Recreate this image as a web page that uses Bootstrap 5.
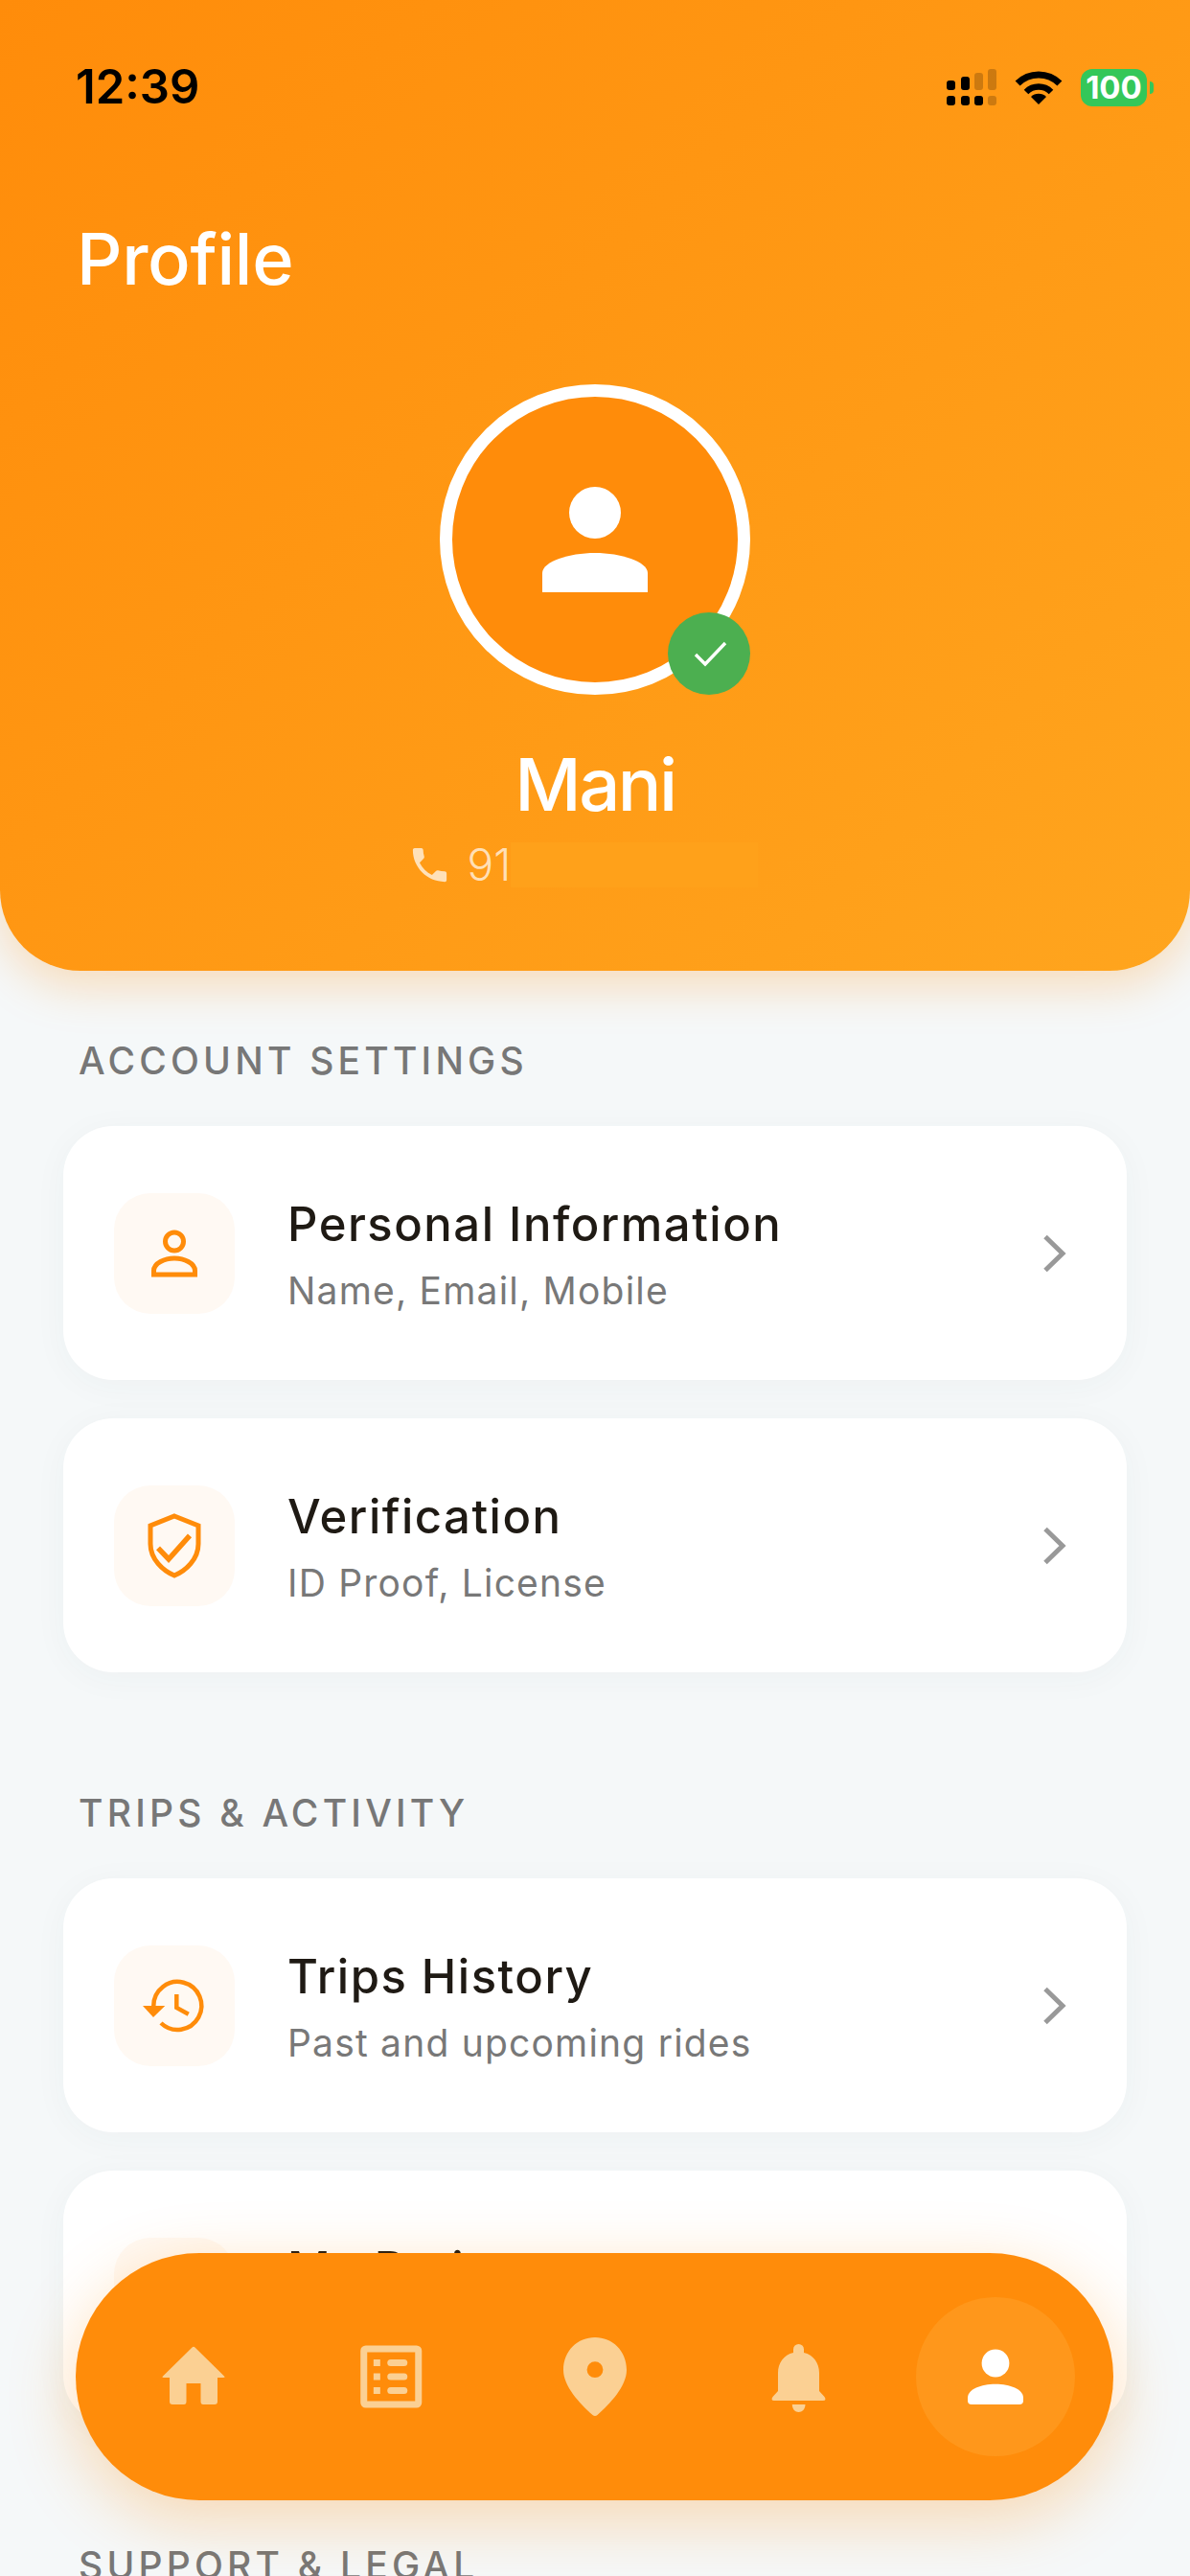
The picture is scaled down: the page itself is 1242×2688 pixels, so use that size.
<!DOCTYPE html>
<html lang="en">
<head>
    <meta charset="UTF-8">
    <meta name="viewport" content="width=device-width, initial-scale=1.0">
    <title>Profile</title>
    <link href="https://cdn.jsdelivr.net/npm/bootstrap@5.3.0/dist/css/bootstrap.min.css" rel="stylesheet">
    <style>
        html, body {
            height: 100vh;
            overflow: hidden;
        }
        body {
            background-color: #f5f8f9;
            font-family: "Inter", "Liberation Sans", sans-serif;
        }
        .profile-head {
            background: linear-gradient(135deg, #ff8c0a 0%, #ffa51e 100%);
            border-radius: 0 0 84px 84px;
            box-shadow: 0 14px 50px rgba(255, 140, 10, 0.28);
            padding: 46px 0 87px;
        }
        .status-row {
            height: 90px;
            padding: 0 38px 0 79px;
        }
        .status-time {
            font-size: 49px;
            font-weight: 600;
            color: #000;
        }
        .status-icons {
            gap: 19px;
        }
        .batt-body {
            width: 69px;
            height: 39px;
            background-color: #34c759;
            border-radius: 12px;
            color: #fff;
            font-size: 33px;
            font-weight: 700;
            line-height: 39px;
            text-align: center;
        }
        .batt-nub {
            width: 4px;
            height: 13px;
            margin-left: 3px;
            background-color: #34c759;
            border-radius: 0 4px 4px 0;
        }
        .page-title {
            font-size: 74px;
            line-height: 90px;
            font-weight: 530;
            letter-spacing: -0.3px;
            color: #fff;
            margin: 89px 0 86px 80px;
        }
        .avatar-ring {
            width: 324px;
            height: 324px;
            border: 13px solid #fff;
            background-color: #ff8c0a;
        }
        .avatar-badge {
            width: 86px;
            height: 86px;
            right: -13px;
            bottom: -13px;
            background-color: #4caf50;
        }
        .user-name {
            font-size: 76px;
            line-height: 92px;
            font-weight: 530;
            letter-spacing: -2.5px;
            color: #fff;
            margin: 47px 0 15px;
        }
        .user-phone {
            height: 47px;
            color: rgba(255, 255, 255, 0.7);
            font-size: 46px;
            line-height: 47px;
            font-weight: 300;
        }
        .phone-mask {
            width: 258px;
            height: 47px;
            margin-right: 26px;
            background-color: #ffa11a;
        }
        .settings-wrap {
            padding: 71px 66px 0;
        }
        .group-label {
            font-size: 39px;
            line-height: 46px;
            font-weight: 500;
            letter-spacing: 4.2px;
            color: #777;
            padding-left: 16px;
            margin-bottom: 45px;
        }
        .group-next {
            margin-top: 124px;
        }
        .setting-card {
            height: 265px;
            border-radius: 52px;
            box-shadow: 0 6px 36px rgba(60, 70, 80, 0.04);
            margin-bottom: 40px;
            padding: 0 53px;
        }
        .setting-card:last-child {
            margin-bottom: 0;
        }
        .icon-tile {
            width: 126px;
            height: 126px;
            border-radius: 38px;
            background-color: #fff9f3;
            margin-right: 55px;
        }
        .setting-text {
            padding-top: 2px;
        }
        .setting-title {
            font-size: 49px;
            line-height: 60px;
            font-weight: 500;
            color: #1f1a14;
            letter-spacing: 1.5px;
        }
        .setting-sub {
            font-size: 39px;
            line-height: 46px;
            color: #787878;
            letter-spacing: 1.2px;
            margin-top: 16px;
        }
        .chevron-go {
            margin-right: 8px;
        }
        .bottom-bar {
            left: 79px;
            top: 2351px;
            width: 1083px;
            height: 258px;
            padding: 0 40px;
            border-radius: 129px;
            background-color: #ff8c0a;
            box-shadow: 0 20px 70px rgba(255, 140, 10, 0.3);
            z-index: 10;
        }
        .bar-item {
            width: 166px;
            height: 166px;
            color: #fbd093;
        }
        .bar-item.is-active {
            background-color: #ff971b;
            color: #fff;
        }
    </style>
</head>
<body>
    <div class="profile-head">
        <div class="status-row d-flex align-items-center justify-content-between">
            <span class="status-time">12:39</span>
            <div class="d-flex align-items-center status-icons">
                <svg width="52" height="38" viewBox="0 0 52 38" fill="#000">
                    <rect x="0" y="12" width="9" height="10" rx="3"/>
                    <rect x="15" y="8" width="9" height="14" rx="3"/>
                    <rect x="29" y="4" width="9" height="18" rx="3" opacity=".2"/>
                    <rect x="43" y="0" width="9" height="22" rx="3" opacity=".2"/>
                    <rect x="0" y="28" width="9" height="10" rx="3"/>
                    <rect x="15" y="28" width="9" height="10" rx="3"/>
                    <rect x="29" y="28" width="9" height="10" rx="3"/>
                    <rect x="43" y="28" width="9" height="10" rx="3" opacity=".2"/>
                </svg>
                <svg width="50" height="36" viewBox="0 0 50 36" fill="none" stroke="#000">
                    <path d="M3.1 14A31 31 0 0 1 46.9 14" stroke-width="7"/>
                    <path d="M12 23A18.4 18.4 0 0 1 38 23" stroke-width="6.5"/>
                    <path d="M25 36L17 28A11.3 11.3 0 0 1 33 28Z" fill="#000" stroke="none"/>
                </svg>
                <div class="d-flex align-items-center">
                    <div class="batt-body">100</div>
                    <div class="batt-nub"></div>
                </div>
            </div>
        </div>

        <h1 class="page-title">Profile</h1>

        <div class="d-flex justify-content-center">
            <div class="avatar-ring rounded-circle position-relative d-flex align-items-center justify-content-center">
                <svg width="130" height="130" viewBox="0 0 130 130" fill="#fff">
                    <circle cx="65" cy="37" r="27"/>
                    <path d="M10 120V100C10 88 38 79 65 79C92 79 120 88 120 100V120Z"/>
                </svg>
                <div class="avatar-badge rounded-circle position-absolute d-flex align-items-center justify-content-center">
                    <svg width="40" height="32" viewBox="0 0 40 32" fill="none" stroke="#fff" stroke-width="3.4">
                        <path d="M6 17L16 27L37 5"/>
                    </svg>
                </div>
            </div>
        </div>

        <div class="user-name text-center">Mani</div>
        <div class="user-phone d-flex justify-content-center align-items-center">
            <svg class="phone-icon" width="47" height="47" viewBox="0 0 24 24" fill="currentColor">
                <path d="M6.62 10.79c1.44 2.83 3.76 5.14 6.59 6.59l2.2-2.2c.27-.27.67-.36 1.02-.24 1.12.37 2.33.57 3.57.57.55 0 1 .45 1 1V20c0 .55-.45 1-1 1-9.39 0-17-7.61-17-17 0-.55.45-1 1-1h3.5c.55 0 1 .45 1 1 0 1.25.2 2.45.57 3.57.11.35.03.74-.25 1.02l-2.2 2.2z"/>
            </svg>
            <span class="ms-3">91</span>
            <span class="phone-mask"></span>
        </div>
    </div>

    <div class="settings-wrap">
        <div class="group-label">ACCOUNT SETTINGS</div>
        <div class="card border-0 setting-card d-flex flex-row align-items-center">
            <div class="icon-tile d-flex align-items-center justify-content-center flex-shrink-0">
                <svg width="80" height="80" viewBox="0 0 80 80" fill="none" stroke="#ff8c0a" stroke-width="5">
                    <circle cx="40" cy="27.5" r="9.5"/>
                    <path d="M18.5 62V58C18.5 50 30 45 40 45S61.5 50 61.5 58V62Z"/>
                </svg>
            </div>
            <div class="flex-grow-1 setting-text">
                <div class="setting-title">Personal Information</div>
                <div class="setting-sub">Name, Email, Mobile</div>
            </div>
            <svg class="chevron-go" width="30" height="42" viewBox="0 0 30 42" fill="none" stroke="#999" stroke-width="5">
                <path d="M6 3.5L24 21L6 38.5"/>
            </svg>
        </div>
        <div class="card border-0 setting-card d-flex flex-row align-items-center">
            <div class="icon-tile d-flex align-items-center justify-content-center flex-shrink-0">
                <svg width="80" height="80" viewBox="0 0 80 80" fill="none" stroke="#ff8c0a" stroke-width="5">
                    <path d="M40 9L65 19V38C65 54 52 66 40 71C28 66 15 54 15 38V19Z"/>
                    <path d="M23 42.3L34 54L56 29.3" stroke-width="5.5"/>
                </svg>
            </div>
            <div class="flex-grow-1 setting-text">
                <div class="setting-title">Verification</div>
                <div class="setting-sub">ID Proof, License</div>
            </div>
            <svg class="chevron-go" width="30" height="42" viewBox="0 0 30 42" fill="none" stroke="#999" stroke-width="5">
                <path d="M6 3.5L24 21L6 38.5"/>
            </svg>
        </div>

        <div class="group-label group-next">TRIPS &amp; ACTIVITY</div>
        <div class="card border-0 setting-card d-flex flex-row align-items-center">
            <div class="icon-tile d-flex align-items-center justify-content-center flex-shrink-0">
                <svg width="80" height="80" viewBox="0 0 80 80" fill="none" stroke="#ff8c0a" stroke-width="4.5">
                    <path d="M18.3 40A25 25 0 1 1 26 58"/>
                    <path d="M42.3 28V42L54.7 48.7"/>
                    <path d="M7 40H30.3L18 52Z" fill="#ff8c0a" stroke="none"/>
                </svg>
            </div>
            <div class="flex-grow-1 setting-text">
                <div class="setting-title">Trips History</div>
                <div class="setting-sub">Past and upcoming rides</div>
            </div>
            <svg class="chevron-go" width="30" height="42" viewBox="0 0 30 42" fill="none" stroke="#999" stroke-width="5">
                <path d="M6 3.5L24 21L6 38.5"/>
            </svg>
        </div>
        <div class="card border-0 setting-card d-flex flex-row align-items-center">
            <div class="icon-tile flex-shrink-0"></div>
            <div class="flex-grow-1 setting-text">
                <div class="setting-title">My Ratings</div>
                <div class="setting-sub">&nbsp;</div>
            </div>
        </div>

        <div class="group-label group-next">SUPPORT &amp; LEGAL</div>
    </div>

    <nav class="bottom-bar position-fixed d-flex align-items-center justify-content-between">
        <div class="bar-item rounded-circle d-flex align-items-center justify-content-center">
            <svg width="80" height="100" viewBox="0 -10 80 100" fill="currentColor">
                <path d="M38.5 9.5Q40 8 41.5 9.5L72.5 40Q73 41 71 41H65V66Q65 69 62 69H50Q47.5 69 47.5 66V47H32.5V66Q32.5 69 30 69H18Q15 69 15 66V41H9Q7 41 7.5 40Z"/>
            </svg>
        </div>
        <div class="bar-item rounded-circle d-flex align-items-center justify-content-center">
            <svg width="80" height="100" viewBox="0 -10 80 100" fill="currentColor">
                <rect x="8.75" y="11" width="57" height="58" rx="2" fill="none" stroke="currentColor" stroke-width="7"/>
                <rect x="18.85" y="22" width="7" height="7"/>
                <rect x="18.85" y="36.5" width="7" height="7"/>
                <rect x="18.85" y="51" width="7" height="7"/>
                <rect x="33.25" y="22" width="21" height="7" rx="3.5"/>
                <rect x="33.25" y="36.5" width="21" height="7" rx="3.5"/>
                <rect x="33.25" y="51" width="21" height="7" rx="3.5"/>
            </svg>
        </div>
        <div class="bar-item rounded-circle d-flex align-items-center justify-content-center">
            <svg width="80" height="100" viewBox="0 0 80 100" fill="currentColor">
                <path fill-rule="evenodd" d="M40 9C22 9 7 23 7 43C7 60 24 78 37.5 90Q40 92 42.5 90C56 78 73 60 73 43C73 23 58 9 40 9ZM40 34.3A8.4 8.4 0 1 1 40 51.1A8.4 8.4 0 1 1 40 34.3Z"/>
            </svg>
        </div>
        <div class="bar-item rounded-circle d-flex align-items-center justify-content-center">
            <svg width="80" height="100" viewBox="0 -10 80 100" fill="currentColor">
                <path d="M38 15V11.5A5.5 5.5 0 0 1 49 11.5V15C59 17 65 26 65 36V55L70.5 61Q73 65 69 65H18Q14 65 16.5 61L22 55V36C22 26 28 17 38 15Z"/>
                <path d="M36.8 69H50.5C50.5 74 47 77 43.5 77C40 77 36.8 74 36.8 69Z"/>
            </svg>
        </div>
        <div class="bar-item is-active rounded-circle d-flex align-items-center justify-content-center">
            <svg width="80" height="100" viewBox="0 -10 80 100" fill="currentColor">
                <circle cx="40" cy="26" r="14.4"/>
                <path d="M11 62C11 53 25 47.7 40 47.7C55 47.7 69 53 69 62V65Q69 69 65 69H15Q11 69 11 65Z"/>
            </svg>
        </div>
    </nav>

    <script src="https://cdn.jsdelivr.net/npm/bootstrap@5.3.0/dist/js/bootstrap.bundle.min.js"></script>
</body>
</html>
